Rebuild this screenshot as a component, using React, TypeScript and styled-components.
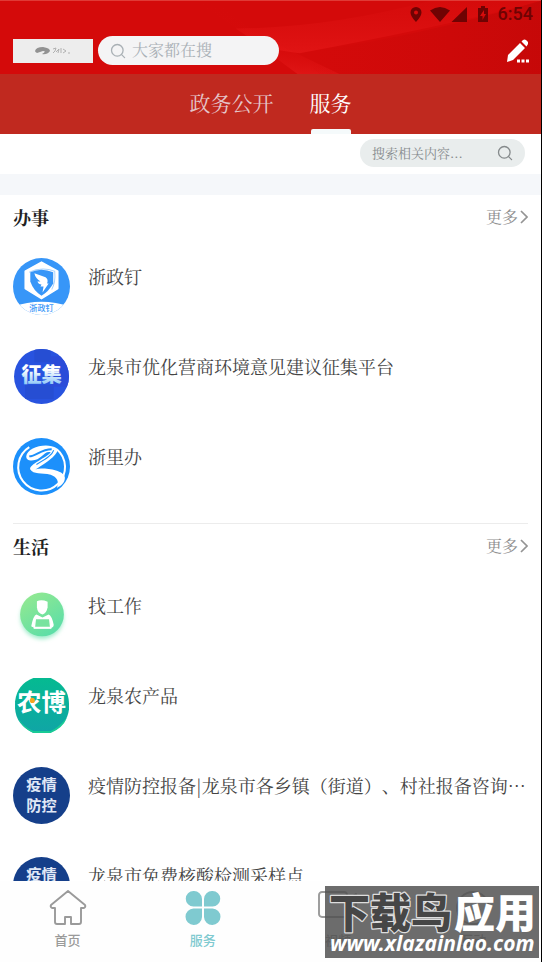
import React from 'react';
import styled, { createGlobalStyle } from 'styled-components';

const serif = '"Noto Serif CJK SC", "Noto Serif SC", "Noto Sans CJK SC", serif';
const sans = '"Noto Sans CJK SC", sans-serif';

const GlobalStyle = createGlobalStyle`
  * { box-sizing: border-box; }
  body { margin: 0; background: #fff; font-family: ${serif}; color: #444; }
  button, input { font: inherit; }
  button { border: 0; padding: 0; background: none; cursor: pointer; }
`;

const Screen = styled.div`
  position: relative;
  display: flex;
  flex-direction: column;
  height: 100vh;
  overflow: hidden;
  border-right: 1px solid #000;
`;

const Header = styled.header`
  position: relative;
  isolation: isolate;
  flex: none;
  border-top: 1px solid #e03a36;
  background: #d40a0a;
`;

const Silk = styled.svg`
  position: absolute;
  inset: 0;
  z-index: -1;
  width: 100%;
  height: 100%;
`;

const StatusBar = styled.div`
  display: flex;
  justify-content: flex-end;
  align-items: center;
  height: 26px;
  padding-right: 8px;
  color: #6f0303;
  font: 500 18px/26px Roboto, sans-serif;
  svg { display: block; }
`;

const StatusIcons = styled.div`
  display: flex;
  align-items: center;
  margin-right: 6px;
`;

const Brand = styled.div`
  display: flex;
  align-items: center;
  gap: 5px;
  height: 47px;
  padding: 0 12px 0 13px;
`;

const Logo = styled.svg`
  display: block;
  flex: none;
`;

const SearchBox = styled.label<{ $compact?: boolean }>`
  display: flex;
  align-items: center;
  flex: none;
  gap: ${p => (p.$compact ? 0 : 6)}px;
  width: ${p => (p.$compact ? 165 : 181)}px;
  height: ${p => (p.$compact ? 28 : 29)}px;
  padding: 0 12px;
  border-radius: 15px;
  background: ${p => (p.$compact ? '#e9eded' : '#f4f4f5')};
  color: ${p => (p.$compact ? '#858a8c' : '#a9b0b5')};
  svg { display: block; flex: none; }
`;

const SearchInput = styled.input<{ $size: number }>`
  flex: 1;
  min-width: 0;
  height: 22px;
  padding: 0 0 2px;
  border: 0;
  outline: 0;
  background: none;
  font-size: ${p => p.$size}px;
  line-height: 20px;
  color: inherit;
  &::placeholder { color: inherit; opacity: 1; }
`;

const EditButton = styled.button`
  margin-left: auto;
  svg { display: block; }
`;

const Tabs = styled.nav`
  display: flex;
  flex: none;
  justify-content: center;
  gap: 36px;
  height: 60px;
  background: #c0291f;
`;

const Tab = styled.button<{ $active?: boolean }>`
  display: flex;
  flex-direction: column;
  justify-content: space-between;
  align-items: center;
  font-size: 21px;
  line-height: 56px;
  height: 60px;
  color: ${p => (p.$active ? '#fff' : '#e5c4c8')};
  &::after {
    content: '';
    width: 40px;
    height: 5px;
    margin-top: -4px;
    border-radius: 2px 2px 0 0;
    background: ${p => (p.$active ? '#f5fafb' : 'transparent')};
  }
`;

const FilterRow = styled.div`
  display: flex;
  flex: none;
  justify-content: flex-end;
  align-items: center;
  height: 40px;
  padding: 0 16px 2px;
`;

const Band = styled.div`
  flex: none;
  height: 21px;
  background: #f5f7fa;
`;

const Content = styled.main`
  flex: 1;
  min-height: 0;
  overflow: hidden;
`;

const Section = styled.section`
  margin: 0 13px;
  padding-bottom: 13px;
  & + & { border-top: 1px solid #ececec; }
`;

const SectionHead = styled.div`
  display: flex;
  justify-content: space-between;
  align-items: flex-start;
  height: 45px;
  padding-top: 10px;
`;

const Title = styled.h2`
  margin: 0;
  font-size: 18px;
  line-height: 24px;
  font-weight: 700;
  color: #222;
`;

const More = styled.a`
  display: flex;
  align-items: center;
  gap: 2px;
  font-size: 16px;
  line-height: 24px;
  color: #8e8e8e;
  text-decoration: none;
`;

const List = styled.ul`
  margin: 0;
  padding: 0;
  list-style: none;
`;

const Item = styled.a`
  display: flex;
  gap: 18px;
  height: 90px;
  padding-top: 18px;
  color: #444;
  text-decoration: none;
  svg { display: block; flex: none; }
`;

const ItemName = styled.span`
  min-width: 0;
  overflow: hidden;
  white-space: nowrap;
  text-spacing-trim: space-all;
  font-size: 18px;
  line-height: 36px;
`;

const BottomNav = styled.nav`
  display: grid;
  flex: none;
  grid-template-columns: repeat(4, 1fr);
  height: 81px;
  background: #fefefe;
`;

const NavItem = styled.button<{ $active?: boolean }>`
  display: flex;
  flex-direction: column;
  align-items: center;
  gap: 3px;
  padding-top: 8px;
  font-family: ${sans};
  font-size: 13px;
  font-weight: 500;
  line-height: 20px;
  color: ${p => (p.$active ? '#7fcad0' : '#9a9a9a')};
`;

const Watermark = styled.div`
  position: absolute;
  right: 2px;
  bottom: 4px;
  background: rgba(80, 80, 80, 0.84);
  svg { display: block; }
`;

const SearchIcon = ({ size }: { size: number }) => (
  <svg width={size} height={size} viewBox="0 0 16 16" fill="none" stroke="currentColor" strokeWidth="1.3" strokeLinecap="round">
    <circle cx="7.3" cy="7.3" r="5.8" />
    <path d="M11.6 11.6 14.6 14.6" />
  </svg>
);

const Chevron = () => (
  <svg width="8" height="14" viewBox="0 0 8 14" fill="none" stroke="#949494" strokeWidth="1.7">
    <path d="M1 1 7 7 1 13" />
  </svg>
);

const DingIcon = () => (
  <svg width="57" height="57" viewBox="0 0 56 56">
    <defs><clipPath id="dingClip"><circle cx="28" cy="28" r="28" /></clipPath></defs>
    <g clipPath="url(#dingClip)">
      <rect width="56" height="56" fill="#3796f8" />
      <path d="M0 48Q28 38 56 48V56H0Z" fill="#fff" />
      <path d="M28 4 44 13V30L28 40 12 30V13Z" fill="#fff" stroke="#fff" strokeWidth="1.5" strokeLinejoin="round" />
      <path d="M16 14Q28 8 41 13Q42 24 38 31" fill="none" stroke="#a9d3fd" strokeWidth="1" />
      <path d="M17 14Q28 9 39.500 14V25Q35 33 28 37Q20 32 17 23Z" fill="#3796f8" />
      <path d="M21 15 32 19Q35 21 33.500 25L35 25 29 34 30 28H27L28 26Q25 26 24 23L27 23Q22 20 21 15Z" fill="#fff" />
      <text x="28" y="52" textAnchor="middle" fontFamily={sans} fontSize="8" fontWeight="500" fill="#3796f8">浙政钉</text>
    </g>
  </svg>
);

const CollectIcon = () => (
  <svg width="57" height="57" viewBox="0 0 56 56">
    <defs>
      <linearGradient id="collectText" x1="0" y1="0" x2="0" y2="1"><stop offset=".4" stopColor="#fff" /><stop offset="1" stopColor="#79bdf5" /></linearGradient>
      <clipPath id="collectClip"><circle cx="28" cy="28" r="27" /></clipPath>
    </defs>
    <g clipPath="url(#collectClip)">
      <rect width="56" height="56" fill="#2853df" />
      <path d="M21 0H37V14H21ZM12 36H40V50H12Z" fill="#264ed3" />
      <path d="M37 8H56V38H37Z" fill="#2b4cd9" />
      <text x="28" y="33" textAnchor="middle" fontFamily={sans} fontSize="20" fontWeight="900" fill="url(#collectText)">征集</text>
    </g>
  </svg>
);

const ZheliIcon = () => (
  <svg width="57" height="57" viewBox="0 0 56 56">
    <circle cx="28" cy="28" r="28" fill="#1c90fb" />
    <path d="M16 9A23 23 0 1 0 43 11" fill="none" stroke="#fff" strokeWidth="2" />
    <path d="M13 18C14 9 33 4 43 10C46 15 36 22 22 31C31 28 51 32 51 39C51 44 47 47 43 49C46 43 43 38 37 36C28 34 20 36 17 31C15 26 34 19 37 14C30 12 28 23 17 22C14 22 13 20 13 18Z" fill="#fff" />
    <path d="M16 18C23 18 27 11 38 11" fill="none" stroke="#1c90fb" strokeWidth="2" />
    <path d="M23 26C30 22 38 18 40 12" fill="none" stroke="#1c90fb" strokeWidth="1" />
  </svg>
);

const JobIcon = () => (
  <svg width="57" height="57" viewBox="0 0 56 56">
    <defs>
      <linearGradient id="jobFill" x1=".15" y1="0" x2=".8" y2="1"><stop stopColor="#94e990" /><stop offset="1" stopColor="#59dda9" /></linearGradient>
      <filter id="jobShadow" x="-30%" y="-30%" width="160%" height="160%"><feGaussianBlur stdDeviation="2" /></filter>
    </defs>
    <circle cx="28.500" cy="30" r="21" fill="#9cebc9" filter="url(#jobShadow)" />
    <circle cx="28.500" cy="27" r="21.500" fill="url(#jobFill)" />
    <path d="M23.500 14Q28 12 34 14.500V20Q33 26 29 27Q24 26 23.500 20Z" fill="#fff" />
    <path d="M23 27 29 30 35 27Q38 28 40 37Q40 40 37 40L36 31H22L21 39Q18 40 18 38Q20 28 23 27Z" fill="#fff" />
    <path d="M22 31H36L37 40H21Z" fill="#78e39f" stroke="#fff" strokeWidth="1.300" strokeLinejoin="round" />
    <path d="M21 40H37" stroke="#fff" strokeWidth="2" strokeLinecap="round" />
  </svg>
);

const FarmIcon = () => (
  <svg width="57" height="57" viewBox="0 0 56 56">
    <defs><linearGradient id="farmFill" x1="0" y1="0" x2="0" y2="1"><stop stopColor="#05ba91" /><stop offset="1" stopColor="#10a5a6" /></linearGradient></defs>
    <path d="M20 1H37Q55 9 55 26V32Q53 48 36 55H20Q3 47 2 31V24Q4 7 20 1Z" fill="url(#farmFill)" />
    <path d="M4 39Q10 51 20 55H37Q49 50 53 40Q43 51 37 53H20Q11 50 4 39Z" fill="#19cb96" />
    <text x="28" y="33" textAnchor="middle" fontFamily={sans} fontSize="24" fontWeight="700" fill="#fff">农博</text>
    <circle cx="19" cy="23" r="2.500" fill="#f4a620" />
  </svg>
);

const EpidemicIcon = () => (
  <svg width="57" height="57" viewBox="0 0 56 56">
    <circle cx="28" cy="28" r="28" fill="#153f8a" />
    <g fontFamily={sans} fontSize="15" fontWeight="700" fill="#e0e8f6" textAnchor="middle">
      <text x="28" y="23">疫情</text>
      <text x="28" y="43">防控</text>
    </g>
  </svg>
);

const HomeIcon = () => (
  <svg width="38" height="38" viewBox="0 0 38 38" fill="none" stroke="currentColor" strokeWidth="1.900" strokeLinejoin="round">
    <path d="M19 2 36 16Q37 18 35 19H32V33Q32 35 30 35H22V28H16V35H8Q6 35 6 33V19H3Q1 18 2 16Z" />
  </svg>
);

const CloverIcon = () => (
  <svg width="38" height="38" viewBox="0 0 38 38" fill="currentColor">
    <path d="M9.500 2A8 8 0 0 1 18 10V17.500H9.500A7.750 7.750 0 0 1 9.500 2ZM28.500 2A7.750 7.750 0 0 1 28.500 17.500H20V10A8 8 0 0 1 28.500 2ZM9.500 19.500H18V28A8.250 8.250 0 1 1 9.500 19.500ZM20 19.500H28.500A8.250 8.250 0 1 1 20 28Z" />
  </svg>
);

const VideoIcon = () => (
  <svg width="42" height="38" viewBox="0 0 42 38" fill="none" stroke="currentColor" strokeWidth="1.900" strokeLinejoin="round">
    <rect x="2" y="3" width="28" height="25" rx="3" />
    <path d="M30 11 39 5V26L30 21" />
  </svg>
);

const ChatIcon = () => (
  <svg width="38" height="38" viewBox="0 0 38 38" fill="none" stroke="currentColor" strokeWidth="1.900">
    <circle cx="19" cy="19" r="16" />
    <path d="M12 20Q19 28 26 20" />
  </svg>
);

const services = [
  {
    title: '办事',
    items: [
      { name: '浙政钉', Icon: DingIcon },
      { name: '龙泉市优化营商环境意见建议征集平台', Icon: CollectIcon },
      { name: '浙里办', Icon: ZheliIcon },
    ],
  },
  {
    title: '生活',
    items: [
      { name: '找工作', Icon: JobIcon },
      { name: '龙泉农产品', Icon: FarmIcon },
      { name: '疫情防控报备|龙泉市各乡镇（街道）、村社报备咨询⋯', Icon: EpidemicIcon },
      { name: '龙泉市免费核酸检测采样点', Icon: EpidemicIcon },
    ],
  },
];

const navItems = [
  { name: '首页', Icon: HomeIcon },
  { name: '服务', Icon: CloverIcon, active: true },
  { name: '视频', Icon: VideoIcon },
  { name: '互动', Icon: ChatIcon },
];

export default function App() {
  return (
    <>
      <GlobalStyle />
      <Screen lang="zh-CN">
        <Header>
          <Silk viewBox="0 0 542 74" preserveAspectRatio="none" aria-hidden="true">
            <defs>
              <linearGradient id="fold" x1="0" y1="1" x2=".25" y2="0"><stop stopColor="#f43030" stopOpacity=".55" /><stop offset=".5" stopColor="#e81212" stopOpacity=".1" /><stop offset="1" stopColor="#d40a0a" stopOpacity="0" /></linearGradient>
              <linearGradient id="sheen" x1="0" y1="0" x2="0" y2="1"><stop stopColor="#e51616" stopOpacity=".1" /><stop offset="1" stopColor="#ef2020" stopOpacity=".45" /></linearGradient>
              <linearGradient id="shade" x1="0" y1="0" x2="1" y2="0"><stop stopColor="#c80808" stopOpacity="0" /><stop offset="1" stopColor="#bd0707" stopOpacity=".6" /></linearGradient>
            </defs>
            <path d="M193 0Q225 18 246 35L298 74H340L260 35 215 0Z" fill="url(#fold)" />
            <path d="M236 28Q330 27 430 0H541Q450 25 300 53L266 48Z" fill="url(#sheen)" />
            <path d="M300 53Q420 36 541 0V74H320Z" fill="url(#shade)" />
          </Silk>
          <StatusBar>
            <StatusIcons>
              <svg width="82" height="18" viewBox="0 0 82 18" fill="currentColor">
                <path fillRule="evenodd" d="M6 2A5.500 5.500 0 0 0 .5 7.500C.5 11.500 6 17 6 17S11.500 11.500 11.500 7.500A5.500 5.500 0 0 0 6 2ZM6 5.500A2 2 0 1 1 6 9.500A2 2 0 0 1 6 5.500Z" />
                <path d="M20 5.500Q30-1.500 40 5.500L30 17ZM57 2V17H41.500Z" />
                <path fillRule="evenodd" d="M68 3H71V1H75V3H78V17H68ZM74 5 70 11H72.500V15L76 9H74Z" />
              </svg>
            </StatusIcons>
            <time>6:54</time>
          </StatusBar>
          <Brand>
            <Logo width="80" height="24" viewBox="0 0 80 24" role="img" aria-label="标志">
              <rect width="80" height="24" fill="#ededed" />
              <path d="M22 12Q23 8 30 8Q37 9 37 12Q34 16 29 15Q34 12 30 12L24 14Q22 13 22 12Z" fill="#929292" />
              <path d="M40 10 43 9 42 12 40 14M43 13 46 10 45 14M48 9V14M50 10 53 12 50 14M55 14H57" fill="none" stroke="#aaa" strokeWidth=".9" />
            </Logo>
            <SearchBox>
              <SearchIcon size={16} />
              <SearchInput $size={16} type="search" aria-label="搜索" placeholder="大家都在搜" />
            </SearchBox>
            <EditButton aria-label="编辑">
              <svg width="22" height="24" viewBox="0 0 22 24" fill="#fff">
                <path d="M0 23 1 16 13 4 18 9 6 21ZM14.500 2.500 16 1Q17.500 0 19 1L21 3V5L19.500 7.500Z" />
                <path d="M10 20.500H13V23.500H10ZM14.500 20.500H17.500V23.500H14.500ZM19 20.500H22V23.500H19Z" />
              </svg>
            </EditButton>
          </Brand>
        </Header>
        <Tabs>
          <Tab>政务公开</Tab>
          <Tab $active aria-current="page">服务</Tab>
        </Tabs>
        <FilterRow>
          <SearchBox $compact>
            <SearchInput $size={13} type="search" aria-label="搜索相关内容" placeholder="搜索相关内容..." />
            <SearchIcon size={16} />
          </SearchBox>
        </FilterRow>
        <Band />
        <Content>
          {services.map(group => (
            <Section key={group.title}>
              <SectionHead>
                <Title>{group.title}</Title>
                <More href="#">更多<Chevron /></More>
              </SectionHead>
              <List>
                {group.items.map(({ name, Icon }) => (
                  <li key={name}>
                    <Item href="#"><Icon /><ItemName>{name}</ItemName></Item>
                  </li>
                ))}
              </List>
            </Section>
          ))}
        </Content>
        <BottomNav>
          {navItems.map(({ name, Icon, active }) => (
            <NavItem key={name} $active={active}><Icon />{name}</NavItem>
          ))}
        </BottomNav>
        <Watermark>
          <svg width="214" height="72" viewBox="0 0 214 72">
            <g fontFamily={sans} fontSize="41" fontWeight="900" strokeLinejoin="round">
              <text x="4" y="42" fill="#464646" stroke="#ddd" strokeWidth="2.500" paintOrder="stroke">下载鸟</text>
              <text x="129" y="42" fill="#fff">应用</text>
            </g>
            <text x="5" y="65" fontFamily='"Noto Sans", sans-serif' fontSize="21" fontWeight="700" fontStyle="italic" fill="#fff">www.xlazainlao.com</text>
          </svg>
        </Watermark>
      </Screen>
    </>
  );
}
